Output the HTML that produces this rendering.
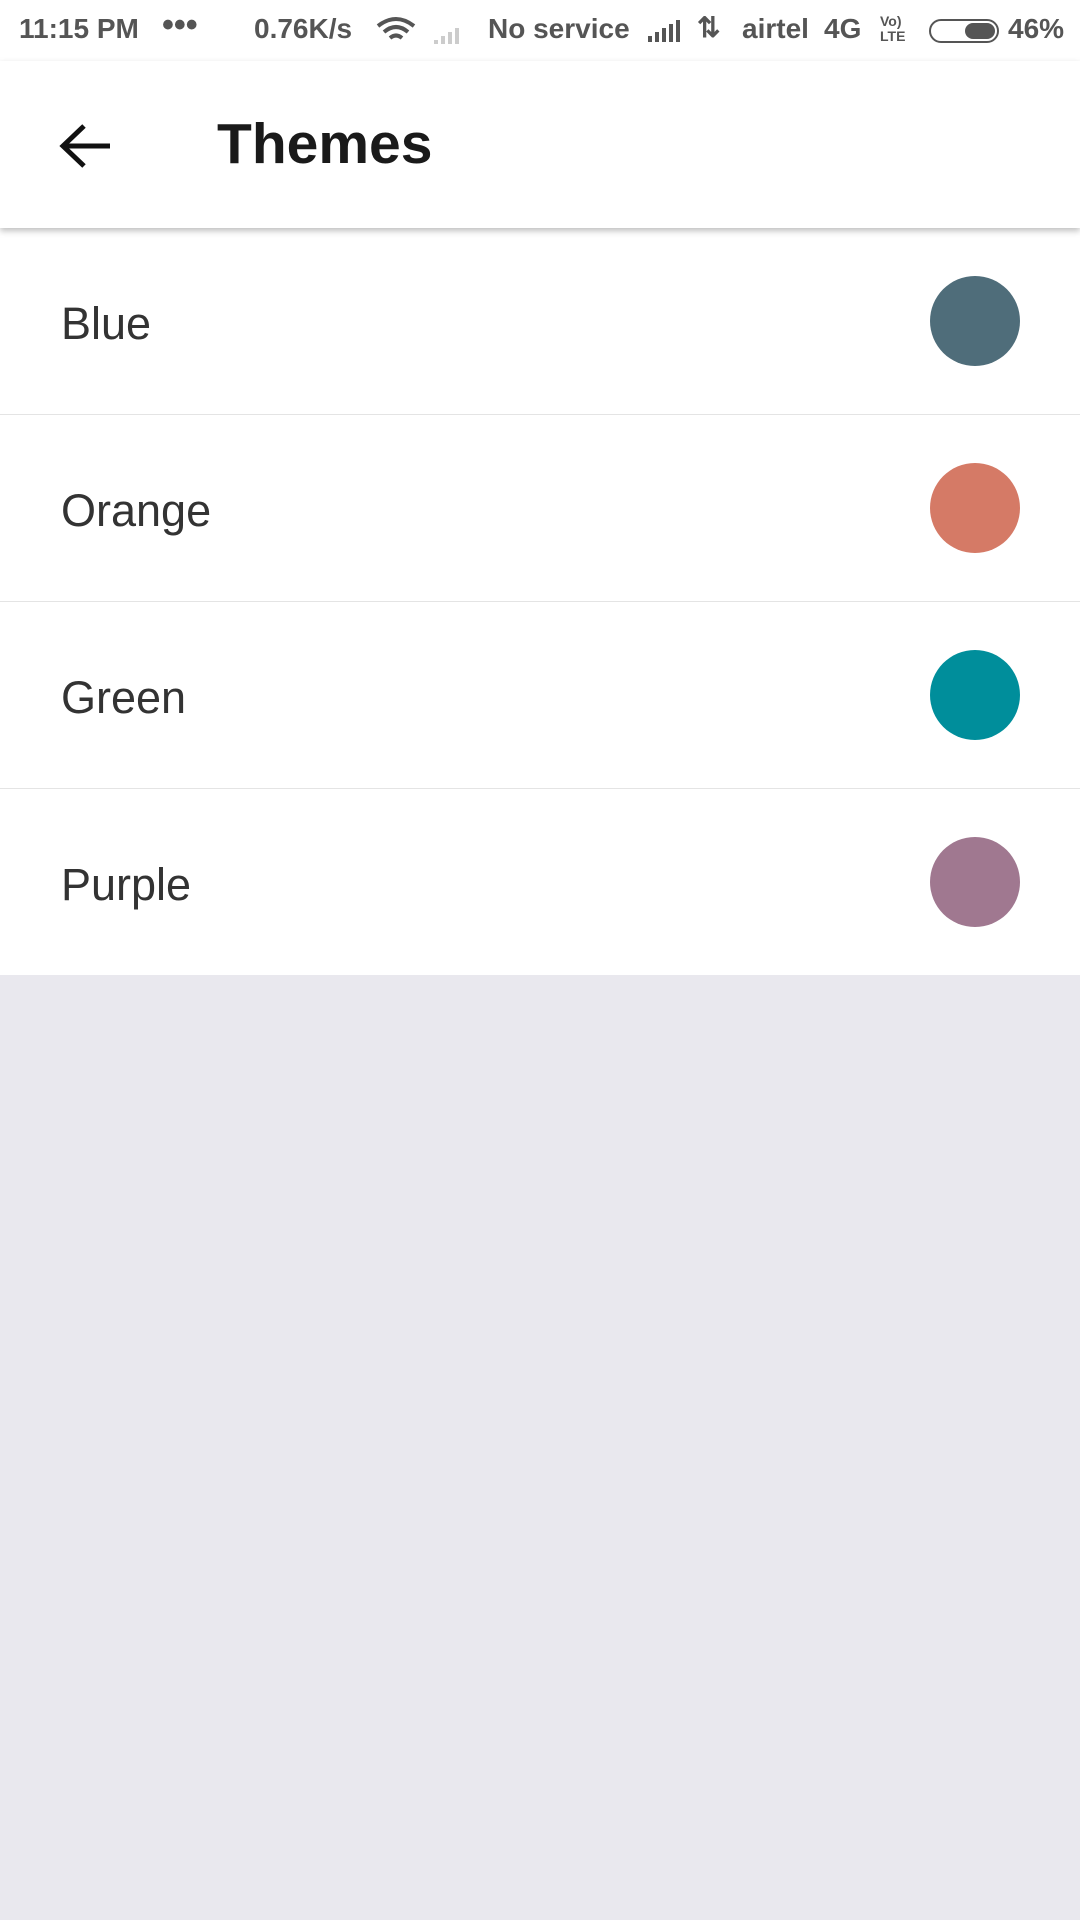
<!DOCTYPE html>
<html><head><meta charset="utf-8"><style>
*{margin:0;padding:0;box-sizing:border-box}
body{width:1080px;height:1920px;background:#e9e8ee;font-family:"Liberation Sans",Roboto,sans-serif;position:relative;overflow:hidden}
.status{position:absolute;top:0;left:0;width:1080px;height:61px;background:#fff;color:#555;font-weight:bold;font-size:28px}
.status span{position:absolute;top:13px}
.bar{position:absolute;top:61px;left:0;width:1080px;height:167px;background:#fff;box-shadow:0 3px 6px rgba(0,0,0,.25);z-index:2}
.title{position:absolute;left:217px;top:50px;font-size:57px;font-weight:bold;color:#1a1a1a}
.list{position:absolute;top:228px;left:0;width:1080px;background:#fff}
.row{height:187px;border-bottom:1px solid #e4e4e4;position:relative}
.row:last-child{border-bottom:none;height:186px}
.row .t{position:absolute;left:61px;top:70px;font-size:45px;color:#333}
.row .c{position:absolute;left:930px;top:48px;width:90px;height:90px;border-radius:50%}
</style></head><body>
<div class="status">
<span style="left:19px">11:15 PM</span><span style="left:162px;top:6px;font-size:34px">•••</span>
<span style="left:254px">0.76K/s</span>
<svg style="position:absolute;left:376px;top:16px" width="40" height="30" viewBox="0 0 40 30"><path d="M2 10Q20-4 38 10M8 16Q20 6 32 16M14 22Q20 17 26 22" fill="none" stroke="#555" stroke-width="4"/></svg>
<svg style="position:absolute;left:432px;top:20px" width="40" height="26" viewBox="0 0 40 26"><path d="M2 24h4v-4h-4zM9 24h4v-8h-4zM16 24h4v-12h-4zM23 24h4v-16h-4z" fill="#ccc"/></svg>
<span style="left:488px">No service</span>
<svg style="position:absolute;left:646px;top:18px" width="40" height="26" viewBox="0 0 40 26"><path d="M2 24h4v-6h-4zM9 24h4v-10h-4zM16 24h4v-14h-4zM23 24h4v-18h-4zM30 24h4v-22h-4z" fill="#555"/></svg>
<span style="left:697px;top:11px">⇅</span>
<span style="left:742px">airtel</span><span style="left:824px">4G</span>
<span style="left:880px;top:14px;font-size:14px;line-height:15px">Vo)<br>LTE</span>
<div style="position:absolute;left:929px;top:19px;width:70px;height:24px;border:2px solid #555;border-radius:12px"><div style="position:absolute;right:2px;top:2px;width:30px;height:16px;background:#555;border-radius:8px"></div></div>
<span style="left:1008px">46%</span>
</div>
<div class="bar">
<svg style="position:absolute;left:58px;top:60px" width="54" height="50" viewBox="0 0 54 50"><path d="M52 25H6M26 5L5 25l21 20" fill="none" stroke="#111" stroke-width="5"/></svg>
<div class="title">Themes</div>
</div>
<div class="list">
<div class="row"><div class="t">Blue</div><div class="c" style="background:#4f6d7a"></div></div>
<div class="row"><div class="t">Orange</div><div class="c" style="background:#d57a66"></div></div>
<div class="row"><div class="t">Green</div><div class="c" style="background:#008e9b"></div></div>
<div class="row"><div class="t">Purple</div><div class="c" style="background:#a07890"></div></div>
</div>
</body></html>
